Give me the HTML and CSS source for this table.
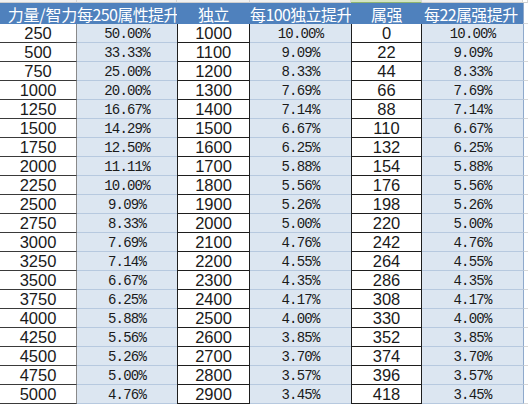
FILE: index.html
```html
<!DOCTYPE html>
<html lang="zh">
<head>
<meta charset="utf-8">
<title>属性提升表</title>
<link rel="stylesheet" href="styles.css">
</head>
<body>
<div class="sheet">
<div class="ch"></div><div class="ch"></div><div class="ch"></div><div class="ch"></div><div class="ch sel"></div><div class="ch"></div><div class="ch end"></div>
<div class="hd h1">力量/智力</div><div class="hd h2">每250属性提升</div><div class="hd">独立</div><div class="hd h4">每100独立提升</div><div class="hd">属强</div><div class="hd h6">每22属强提升</div><div class="x"></div>
<div class="n a">250</div><div class="p b">50.00%</div><div class="n c">1000</div><div class="p b">10.00%</div><div class="n c">0</div><div class="p b">10.00%</div><div class="x"></div>
<div class="n a">500</div><div class="p b">33.33%</div><div class="n c">1100</div><div class="p b">9.09%</div><div class="n c">22</div><div class="p b">9.09%</div><div class="x"></div>
<div class="n a">750</div><div class="p b">25.00%</div><div class="n c">1200</div><div class="p b">8.33%</div><div class="n c">44</div><div class="p b">8.33%</div><div class="x"></div>
<div class="n a">1000</div><div class="p b">20.00%</div><div class="n c">1300</div><div class="p b">7.69%</div><div class="n c">66</div><div class="p b">7.69%</div><div class="x"></div>
<div class="n a">1250</div><div class="p b">16.67%</div><div class="n c">1400</div><div class="p b">7.14%</div><div class="n c">88</div><div class="p b">7.14%</div><div class="x"></div>
<div class="n a">1500</div><div class="p b">14.29%</div><div class="n c">1500</div><div class="p b">6.67%</div><div class="n c">110</div><div class="p b">6.67%</div><div class="x"></div>
<div class="n a">1750</div><div class="p b">12.50%</div><div class="n c">1600</div><div class="p b">6.25%</div><div class="n c">132</div><div class="p b">6.25%</div><div class="x"></div>
<div class="n a">2000</div><div class="p b">11.11%</div><div class="n c">1700</div><div class="p b">5.88%</div><div class="n c">154</div><div class="p b">5.88%</div><div class="x"></div>
<div class="n a">2250</div><div class="p b">10.00%</div><div class="n c">1800</div><div class="p b">5.56%</div><div class="n c">176</div><div class="p b">5.56%</div><div class="x"></div>
<div class="n a">2500</div><div class="p b">9.09%</div><div class="n c">1900</div><div class="p b">5.26%</div><div class="n c">198</div><div class="p b">5.26%</div><div class="x"></div>
<div class="n a">2750</div><div class="p b">8.33%</div><div class="n c">2000</div><div class="p b">5.00%</div><div class="n c">220</div><div class="p b">5.00%</div><div class="x"></div>
<div class="n a">3000</div><div class="p b">7.69%</div><div class="n c">2100</div><div class="p b">4.76%</div><div class="n c">242</div><div class="p b">4.76%</div><div class="x"></div>
<div class="n a">3250</div><div class="p b">7.14%</div><div class="n c">2200</div><div class="p b">4.55%</div><div class="n c">264</div><div class="p b">4.55%</div><div class="x"></div>
<div class="n a">3500</div><div class="p b">6.67%</div><div class="n c">2300</div><div class="p b">4.35%</div><div class="n c">286</div><div class="p b">4.35%</div><div class="x"></div>
<div class="n a">3750</div><div class="p b">6.25%</div><div class="n c">2400</div><div class="p b">4.17%</div><div class="n c">308</div><div class="p b">4.17%</div><div class="x"></div>
<div class="n a">4000</div><div class="p b">5.88%</div><div class="n c">2500</div><div class="p b">4.00%</div><div class="n c">330</div><div class="p b">4.00%</div><div class="x"></div>
<div class="n a">4250</div><div class="p b">5.56%</div><div class="n c">2600</div><div class="p b">3.85%</div><div class="n c">352</div><div class="p b">3.85%</div><div class="x"></div>
<div class="n a">4500</div><div class="p b">5.26%</div><div class="n c">2700</div><div class="p b">3.70%</div><div class="n c">374</div><div class="p b">3.70%</div><div class="x"></div>
<div class="n a">4750</div><div class="p b">5.00%</div><div class="n c">2800</div><div class="p b">3.57%</div><div class="n c">396</div><div class="p b">3.57%</div><div class="x"></div>
<div class="n a">5000</div><div class="p b">4.76%</div><div class="n c">2900</div><div class="p b">3.45%</div><div class="n c">418</div><div class="p b">3.45%</div><div class="x"></div>
</div>
</body>
</html>
```

FILE: styles.css
```css
html, body {
  margin: 0;
  padding: 0;
  background: #ffffff;
}

.sheet {
  display: grid;
  grid-template-columns: 77px 100px 73px 101px 71px 101px 5px;
  grid-template-rows: 3px 21px repeat(20, 19px);
  width: 528px;
  color: #1a1a1a;
}

.sheet > div {
  box-sizing: border-box;
  display: flex;
  align-items: center;
  justify-content: center;
  white-space: nowrap;
  min-width: 0;
}

.ch {
  background: #f1f1f1;
  border-right: 1px solid #d6d6d6;
  border-bottom: 1px solid #cfcfcf;
}

.ch.sel {
  background: #d3e4c4;
  border-bottom-color: #8fb46f;
}

.ch.end {
  background: #ffffff;
}

.hd {
  background: #4f81bd;
  color: #ffffff;
  font-family: "Noto Sans CJK SC", sans-serif;
  font-size: 16px;
  letter-spacing: -0.6px;
}

.hd.h1 {
  justify-content: flex-end;
  letter-spacing: -0.2px;
}

.hd.h2,
.hd.h4 {
  justify-content: flex-start;
}

.hd.h6 {
  justify-content: flex-start;
  padding-left: 2px;
}

.n {
  font-family: "Liberation Sans", sans-serif;
  font-size: 16.5px;
  padding-top: 1px;
}

.p {
  font-family: "Liberation Mono", monospace;
  font-size: 14px;
  letter-spacing: -0.8px;
  padding-top: 1px;
}

.a {
  background: #ffffff;
  border-bottom: 1px solid #3a3a3a;
  border-right: 1px solid #8a8a8a;
}

.b {
  background: #dce6f1;
  border-bottom: 1px solid #b7c9df;
}

.c {
  background: #ffffff;
  border-bottom: 1px solid #1e1e1e;
  border-left: 1px solid #1e1e1e;
  border-right: 1px solid #1e1e1e;
}

.x {
  background: #ffffff;
  border-left: 1px solid #8ea9cc;
  border-bottom: 1px solid #d9d9d9;
}
```
